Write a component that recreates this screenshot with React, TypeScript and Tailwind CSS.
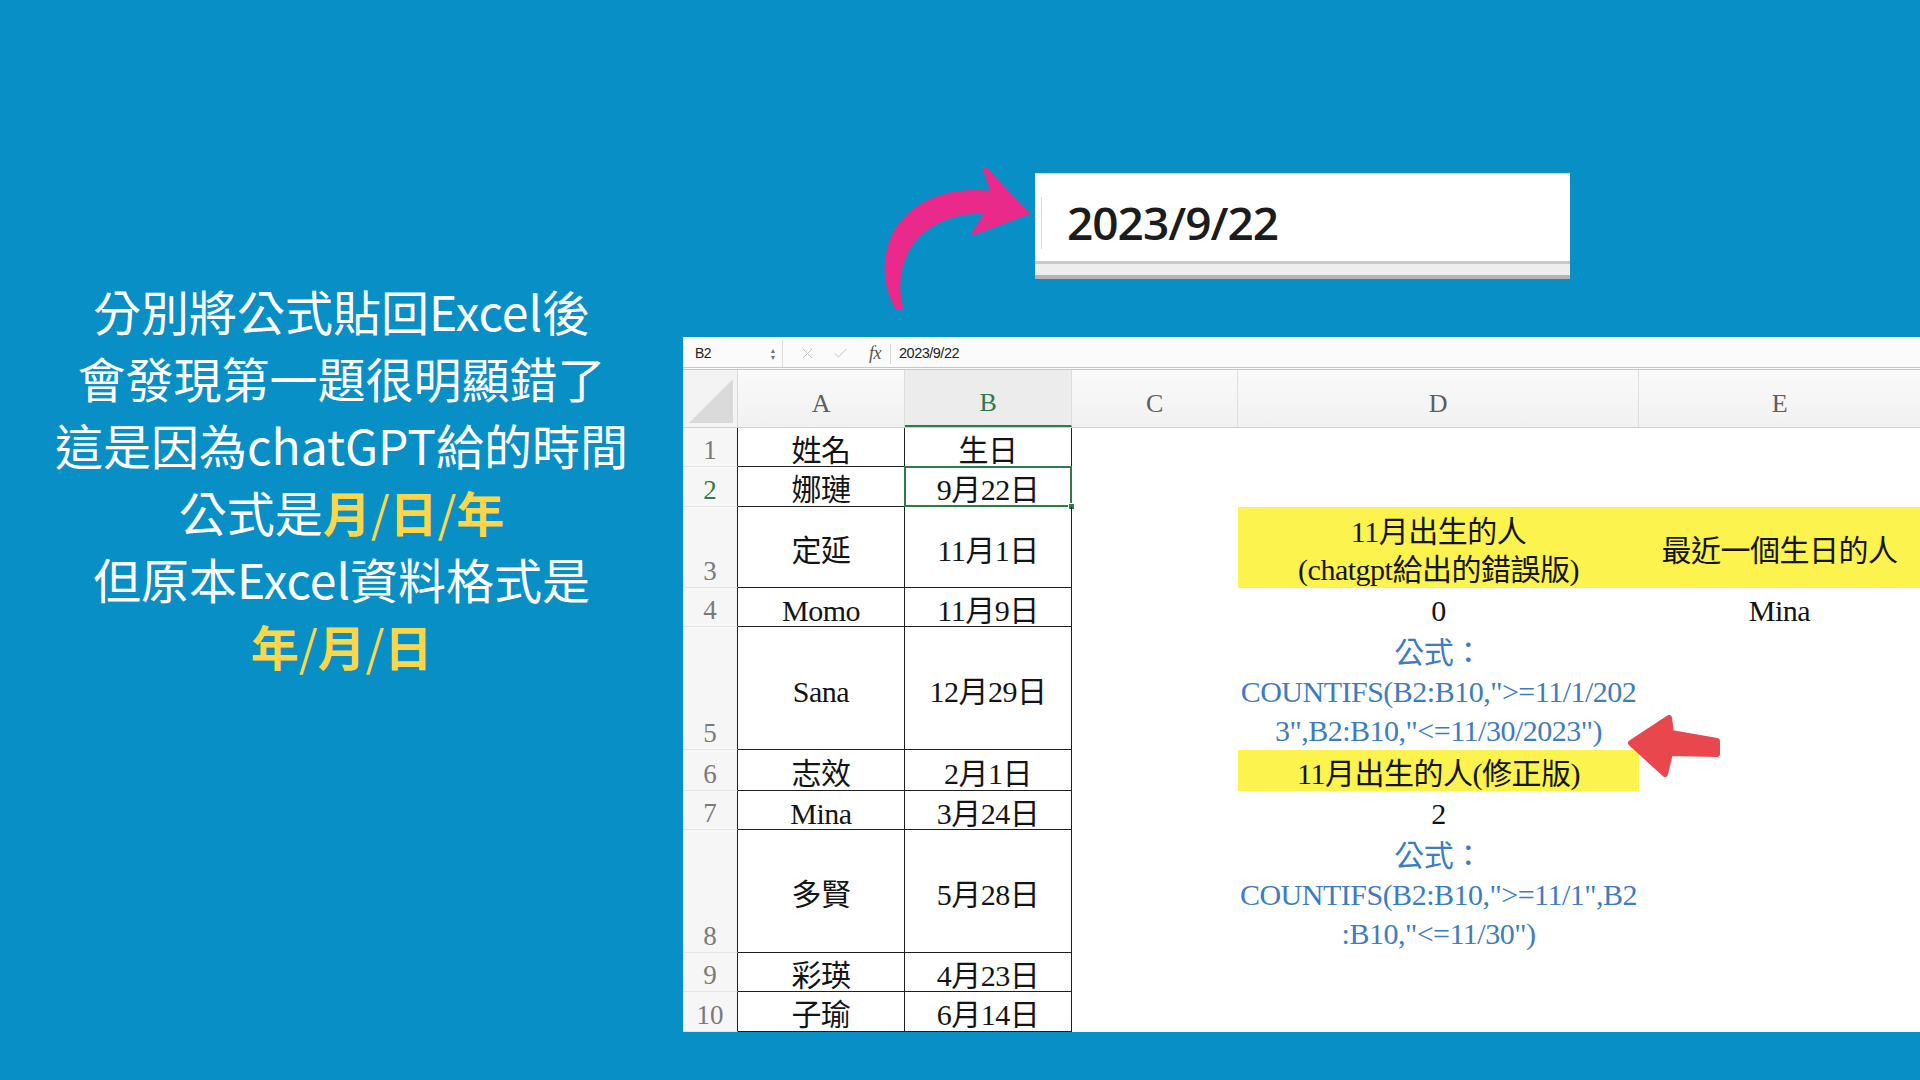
import React from "react";
import { X, Check } from "lucide-react";

// 每一列的資料：列高、A/B 欄內容
const sheetRows = [
  { n: "1", h: "h-[39px]", a: "姓名", b: "生日" },
  { n: "2", h: "h-[40px]", a: "娜璉", b: "9月22日", selected: true },
  { n: "3", h: "h-[81px]", a: "定延", b: "11月1日" },
  { n: "4", h: "h-[39px]", a: "Momo", b: "11月9日" },
  { n: "5", h: "h-[123px]", a: "Sana", b: "12月29日" },
  { n: "6", h: "h-[41px]", a: "志效", b: "2月1日" },
  { n: "7", h: "h-[39px]", a: "Mina", b: "3月24日" },
  { n: "8", h: "h-[123px]", a: "多賢", b: "5月28日" },
  { n: "9", h: "h-[39px]", a: "彩瑛", b: "4月23日" },
  { n: "10", h: "h-[40px]", a: "子瑜", b: "6月14日" },
];

const Formula = ({ lines }: { lines: string[] }) => (
  <div className="text-[#3d7cc0] leading-[39px] whitespace-nowrap">
    {lines.map((l) => (
      <div key={l}>{l}</div>
    ))}
  </div>
);

// D 欄與 E 欄的內容
const renderD = (n: string) => {
  switch (n) {
    case "3":
      return (
        <div className="leading-[38px]">
          <div>11月出生的人</div>
          <div>(chatgpt給出的錯誤版)</div>
        </div>
      );
    case "4":
      return <div>0</div>;
    case "5":
      return <Formula lines={["公式：", 'COUNTIFS(B2:B10,">=11/1/202', '3",B2:B10,"<=11/30/2023")']} />;
    case "6":
      return <div>11月出生的人(修正版)</div>;
    case "7":
      return <div>2</div>;
    case "8":
      return <Formula lines={["公式：", 'COUNTIFS(B2:B10,">=11/1",B2', ':B10,"<=11/30")']} />;
    default:
      return null;
  }
};

const renderE = (n: string) => {
  if (n === "3") return <div>最近一個生日的人</div>;
  if (n === "4") return <div>Mina</div>;
  return null;
};

const PinkArrow = () => (
  <svg width="160" height="152" viewBox="0 0 160 152" className="shrink-0">
    <path
      d="M22 148 C6 120 6 76 40 50 C62 34 90 30 118 33 L110 9 L152 53 L99 73 L112 52 C80 50 48 62 32 90 C22 110 21 128 26 148 Z"
      fill="#ea2a8b"
      stroke="#ea2a8b"
      strokeWidth="4"
      strokeLinejoin="round"
    />
  </svg>
);

const RedArrow = () => (
  <svg width="95" height="68" viewBox="0 0 95 68">
    <path
      d="M4 31 L42 6 L44 21 L90 29 L90 42 L43 41 L38 62 Z"
      fill="#e9474e"
      stroke="#e9474e"
      strokeWidth="6"
      strokeLinejoin="round"
    />
  </svg>
);

const FormulaBar = () => (
  <div className="h-[33px] shrink-0 flex items-center pt-[3px] bg-[#fbfbfb] border-b-[3px] border-double border-[#c6c6c6] font-['Liberation_Sans',sans-serif] text-[#222]">
    <div className="w-[100px] h-full flex items-center justify-between pl-[12px] pr-[6px] border-r border-[#dcdcdc]">
      <span className="text-[14px] font-medium">B2</span>
      <span className="flex flex-col items-center leading-none text-[7px] text-[#777]">
        <span>▲</span>
        <span>▼</span>
      </span>
    </div>
    <X size={17} strokeWidth={1.4} className="ml-[16px] text-[#c2c2c2]" />
    <Check size={17} strokeWidth={1.4} className="ml-[16px] text-[#c2c2c2]" />
    <span className="ml-[20px] font-['Liberation_Serif',serif] italic text-[18px] text-[#555]">fx</span>
    <div className="ml-[9px] w-px h-[20px] bg-[#d6d6d6]" />
    <span className="ml-[8px] text-[14.5px] font-medium">2023/9/22</span>
  </div>
);

const HeaderRow = () => (
  <div className="h-[58px] shrink-0 flex bg-gradient-to-b from-[#fafafa] to-[#f1f1f1] border-b border-[#cfcfcf] text-[26px] text-[#5e5e5e]">
    <div className="w-[55px] h-full border-r border-[#d8d8d8] bg-[#f3f3f3]">
      <svg width="55" height="58" viewBox="0 0 55 58">
        <polygon points="50,9 50,53 6,53" fill="#dadada" />
      </svg>
    </div>
    <div className="w-[167px] flex items-center justify-center pt-[9px] border-r border-[#dedede]">A</div>
    <div className="w-[167px] flex items-center justify-center pt-[9px] border-r border-[#dedede] bg-[#ececec] text-[#2f7a4b] border-b-2 border-b-[#2f7a4b]">
      B
    </div>
    <div className="w-[166px] flex items-center justify-center pt-[9px] border-r border-[#dedede]">C</div>
    <div className="w-[401px] flex items-center justify-center pt-[9px] border-r border-[#dedede]">D</div>
    <div className="flex-1 flex items-center justify-center pt-[9px]">E</div>
  </div>
);

const Sheet = () => (
  <div className="relative w-[1237px] h-[695px] bg-white flex flex-col font-['Liberation_Serif','Noto_Sans_CJK_TC',serif] text-[30px] tracking-[-0.5px] text-[#141414]">
    <FormulaBar />
    <HeaderRow />
    {sheetRows.map((r) => {
      const yellowD = r.n === "3" || r.n === "6";
      const yellowE = r.n === "3";
      return (
        <div key={r.n} className={`${r.h} shrink-0 flex`}>
          <div
            className={`w-[55px] flex items-end justify-center bg-[#f6f6f6] border-b border-[#e4e4e4] border-r border-r-[#1f1f1f] text-[27px] leading-[31px] tracking-normal ${
              r.selected ? "text-[#2f7a4b]" : "text-[#7a7a7a]"
            }`}
          >
            {r.n}
          </div>
          <div className="w-[167px] flex items-center justify-center pt-[7px] border-r border-b border-[#1f1f1f] leading-[36px]">
            {r.a}
          </div>
          <div className="relative w-[167px] flex items-center justify-center pt-[7px] border-r border-b border-[#1f1f1f] leading-[36px]">
            {r.b}
            {r.selected && (
              <div className="absolute -left-px -top-px -right-px -bottom-px border-2 border-[#2f7a4b]">
                <div className="absolute -right-[5px] -bottom-[5px] w-[7px] h-[7px] bg-[#2f7a4b] border border-white" />
              </div>
            )}
          </div>
          <div className="w-[166px]" />
          <div
            className={`w-[401px] flex items-center justify-center pt-[6px] text-center leading-[36px] ${
              yellowD ? "bg-[#fcf34e]" : ""
            }`}
          >
            {renderD(r.n)}
          </div>
          <div
            className={`flex-1 flex items-center justify-center pt-[6px] text-center leading-[36px] ${
              yellowE ? "bg-[#fcf34e]" : ""
            }`}
          >
            {renderE(r.n)}
          </div>
        </div>
      );
    })}
    <div className="absolute left-[944px] top-[375px]">
      <RedArrow />
    </div>
  </div>
);

const Highlight = ({ chars }: { chars: string[] }) => (
  <span className="text-[#fcd64a]">
    {chars.map((c, i) => (
      <React.Fragment key={i}>
        {i > 0 && <span className="font-normal">/</span>}
        <span className="font-bold">{c}</span>
      </React.Fragment>
    ))}
  </span>
);

export default function App() {
  return (
    <div className="w-[1920px] h-[1080px] bg-[#0890c6] flex overflow-hidden">
      <div className="w-[683px] shrink-0 pt-[277px] text-center text-white text-[48px] leading-[67px] font-normal font-['Noto_Sans_CJK_TC','Noto_Sans',sans-serif]">
        <div>分別將公式貼回Excel後</div>
        <div>會發現第一題很明顯錯了</div>
        <div>這是因為chatGPT給的時間</div>
        <div>
          公式是<Highlight chars={["月", "日", "年"]} />
        </div>
        <div>但原本Excel資料格式是</div>
        <div>
          <Highlight chars={["年", "月", "日"]} />
        </div>
      </div>

      <div className="flex-1 flex flex-col">
        <div className="h-[337px] shrink-0 flex items-start pt-[160px] pl-[192px]">
          <PinkArrow />
          <div className="mt-[13px] w-[535px] h-[106px] flex flex-col bg-white border-t border-[#dcdcdc]">
            <div className="flex-1 flex items-center pt-[10px] pl-[6px]">
              <div className="w-px h-[52px] bg-[#d8d8d8]" />
              <span className="ml-[25px] text-[46px] tracking-[-1px] text-[#1c1c1c] font-semibold font-['Open_Sans',sans-serif]">
                2023/9/22
              </span>
            </div>
            <div className="h-[18px] bg-[#eeeeee] border-t-[3px] border-[#c9c9c9] border-b-[4px] border-b-[#b4b4b4]" />
          </div>
        </div>
        <Sheet />
      </div>
    </div>
  );
}
